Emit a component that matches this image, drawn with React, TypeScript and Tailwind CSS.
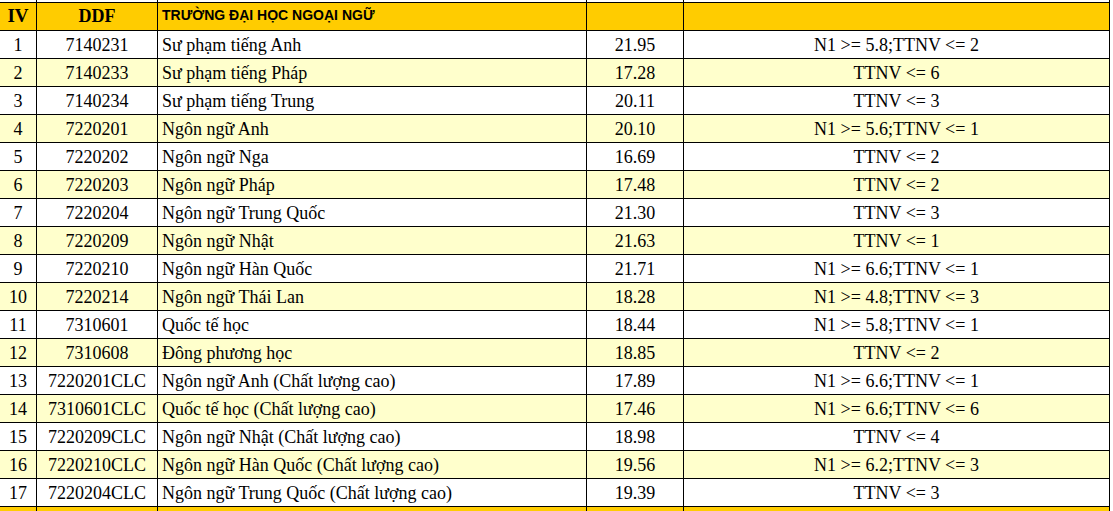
const ROWS: [string, string, string, string, string][] = [
  ['1', '7140231', 'Sư phạm tiếng Anh', '21.95', 'N1 >= 5.8;TTNV <= 2'],
  ['2', '7140233', 'Sư phạm tiếng Pháp', '17.28', 'TTNV <= 6'],
  ['3', '7140234', 'Sư phạm tiếng Trung', '20.11', 'TTNV <= 3'],
  ['4', '7220201', 'Ngôn ngữ Anh', '20.10', 'N1 >= 5.6;TTNV <= 1'],
  ['5', '7220202', 'Ngôn ngữ Nga', '16.69', 'TTNV <= 2'],
  ['6', '7220203', 'Ngôn ngữ Pháp', '17.48', 'TTNV <= 2'],
  ['7', '7220204', 'Ngôn ngữ Trung Quốc', '21.30', 'TTNV <= 3'],
  ['8', '7220209', 'Ngôn ngữ Nhật', '21.63', 'TTNV <= 1'],
  ['9', '7220210', 'Ngôn ngữ Hàn Quốc', '21.71', 'N1 >= 6.6;TTNV <= 1'],
  ['10', '7220214', 'Ngôn ngữ Thái Lan', '18.28', 'N1 >= 4.8;TTNV <= 3'],
  ['11', '7310601', 'Quốc tế học', '18.44', 'N1 >= 5.8;TTNV <= 1'],
  ['12', '7310608', 'Đông phương học', '18.85', 'TTNV <= 2'],
  ['13', '7220201CLC', 'Ngôn ngữ Anh (Chất lượng cao)', '17.89', 'N1 >= 6.6;TTNV <= 1'],
  ['14', '7310601CLC', 'Quốc tế học (Chất lượng cao)', '17.46', 'N1 >= 6.6;TTNV <= 6'],
  ['15', '7220209CLC', 'Ngôn ngữ Nhật (Chất lượng cao)', '18.98', 'TTNV <= 4'],
  ['16', '7220210CLC', 'Ngôn ngữ Hàn Quốc (Chất lượng cao)', '19.56', 'N1 >= 6.2;TTNV <= 3'],
  ['17', '7220204CLC', 'Ngôn ngữ Trung Quốc (Chất lượng cao)', '19.39', 'TTNV <= 3'],
];

// widths include the 1px right border
const W = ['w-[37px]', 'w-[121px]', 'w-[429px]', 'w-[97px]', 'w-[426px]'];

function EmptyRow({ className }: { className: string }) {
  return (
    <div className={`flex ${className}`}>
      {W.map((w, i) => (
        <div key={i} className={`${w} shrink-0 border-r border-black`} />
      ))}
    </div>
  );
}

export default function App() {
  return (
    <div className="w-[1113px] h-[511px] overflow-hidden bg-white font-['Liberation_Serif','Times_New_Roman',serif] text-[18px] text-black">
      <div className="w-[1110px]">
        <EmptyRow className="h-[2px] bg-white" />

        {/* header */}
        <div className="flex h-[29px] border-y border-black bg-[#ffcc00]">
          <div className={`${W[0]} shrink-0 border-r border-black flex items-center justify-center font-bold text-[19px]`}>IV</div>
          <div className={`${W[1]} shrink-0 border-r border-black flex items-center justify-center font-bold`}>DDF</div>
          <div className={`${W[2]} shrink-0 border-r border-black flex items-center pl-1 pb-[2px] font-['Liberation_Sans',Arial,sans-serif] text-[14px] font-bold`}>
            TRƯỜNG ĐẠI HỌC NGOẠI NGỮ
          </div>
          <div className={`${W[3]} shrink-0 border-r border-black`} />
          <div className={`${W[4]} shrink-0 border-r border-black`} />
        </div>

        {ROWS.map(([no, code, name, score, cond], i) => (
          <div
            key={no}
            className={`flex h-[28px] border-b border-black ${i % 2 === 1 ? 'bg-[#ffffcc]' : 'bg-white'}`}
          >
            <div className={`${W[0]} shrink-0 border-r border-black flex items-center justify-center pt-[2px]`}>{no}</div>
            <div className={`${W[1]} shrink-0 border-r border-black flex items-center justify-center pt-[2px]`}>{code}</div>
            <div className={`${W[2]} shrink-0 border-r border-black flex items-center pl-1 pt-[2px] whitespace-nowrap`}>{name}</div>
            <div className={`${W[3]} shrink-0 border-r border-black flex items-center justify-center pt-[2px]`}>{score}</div>
            <div className={`${W[4]} shrink-0 border-r border-black flex items-center justify-center pt-[2px] whitespace-pre`}>{cond}</div>
          </div>
        ))}

        <EmptyRow className="h-[6px] bg-[#ffcc00]" />
      </div>
    </div>
  );
}
